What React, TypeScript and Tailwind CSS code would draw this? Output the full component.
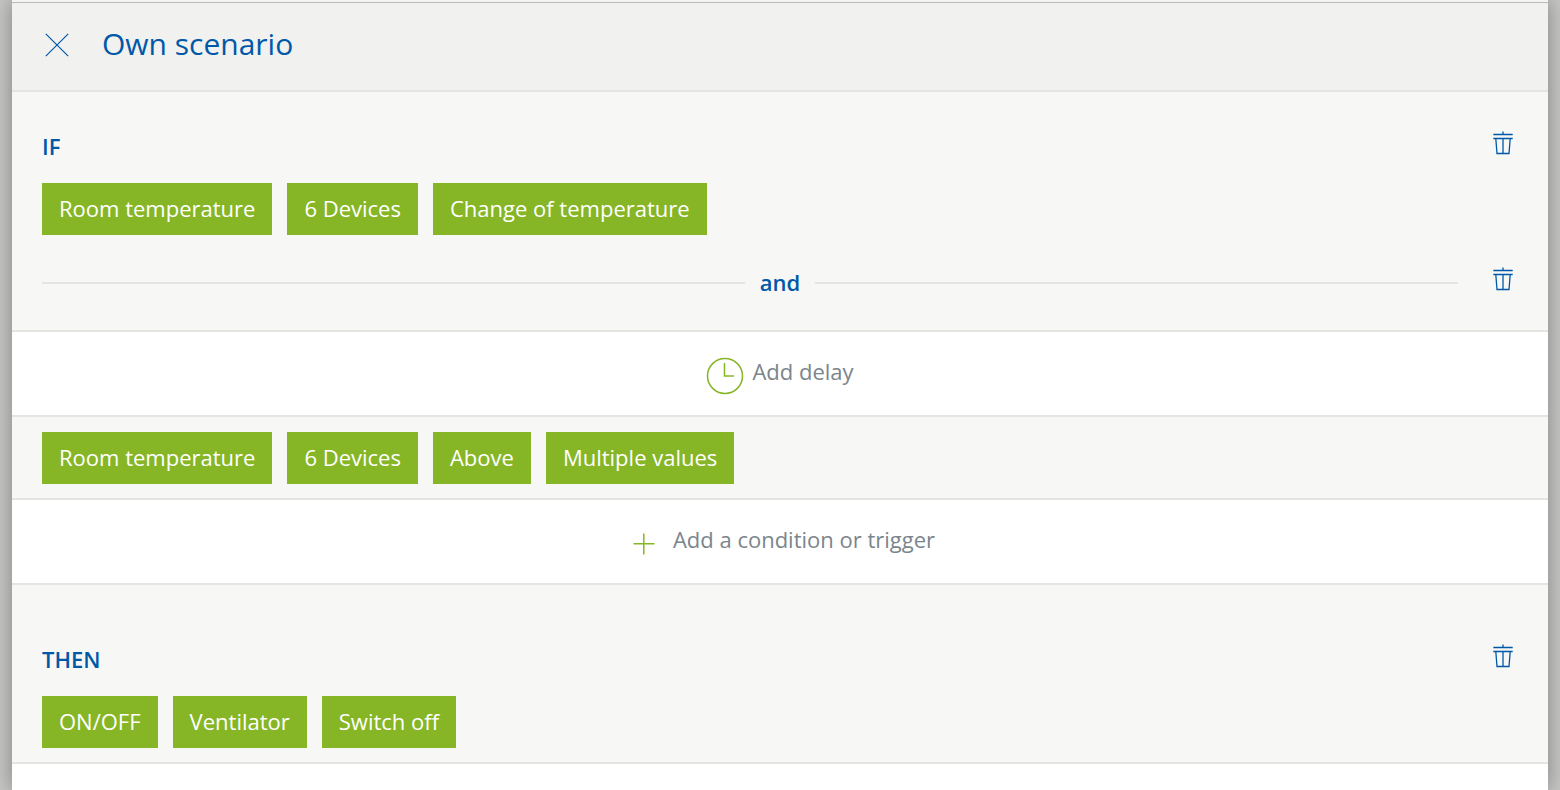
type IconProps = { className?: string };

function CloseIcon({ className }: IconProps) {
  return (
    <svg viewBox="0 0 24 24" className={className} fill="none" stroke="currentColor" strokeWidth="1.2" aria-hidden="true">
      <path d="M.8 .8 23.2 23.2M23.2 .8 .8 23.2" />
    </svg>
  );
}

function TrashIcon({ className }: IconProps) {
  return (
    <svg viewBox="0 0 20 24" className={className} fill="none" stroke="currentColor" strokeWidth="1.3" aria-hidden="true">
      <path d="M.3 3.5h19.4M.3 7.5h19.4M2.8 7.5 4 22.5h12L17.2 7.5" />
      <path d="M10 .5v3M10 7.5v15" />
    </svg>
  );
}

function ClockIcon({ className }: IconProps) {
  return (
    <svg viewBox="0 0 38 38" className={className} fill="none" stroke="currentColor" strokeWidth="1.5" aria-hidden="true">
      <circle cx="19" cy="19" r="17.5" />
      <path d="M18.5 6v13H28" />
    </svg>
  );
}

function PlusIcon({ className }: IconProps) {
  return (
    <svg viewBox="0 0 38 38" className={className} fill="none" stroke="currentColor" strokeWidth="1.5" aria-hidden="true">
      <path d="M18.8 8.5v21M8.5 18.8h21" />
    </svg>
  );
}

function Chips({ items }: { items: string[] }) {
  return (
    <div className="flex flex-wrap gap-[15px]">
      {items.map((item) => (
        <button key={item} type="button" className="h-[52px] bg-[#86b625] px-[17px] pb-0.5 text-white">
          {item}
        </button>
      ))}
    </div>
  );
}

function DeleteButton({ label }: { label: string }) {
  return (
    <button type="button" aria-label={label} className="flex shrink-0 justify-center px-[5px] pb-2 text-[#0058a8]">
      <TrashIcon className="h-6 w-5" />
    </button>
  );
}

export default function App() {
  return (
    <div className="min-h-screen overflow-hidden bg-[#c6c6c4] px-3 font-['Open_Sans','Noto_Sans',sans-serif] text-[22px] leading-8">
      <main className="min-h-screen bg-white shadow-[0_0_20px_rgba(0,0,0,0.35)]">
        {/* Title bar */}
        <div className="h-0.5 bg-[#f4f4f3]" />
        <header className="flex h-[90px] items-center border-t border-b-2 border-t-[#bcbcbb] border-b-[#e4e4e2] bg-[#f1f1ef] px-[33px] pb-1 text-[#0058a8]">
          <button type="button" aria-label="Close">
            <CloseIcon className="size-6" />
          </button>
          <h1 className="ml-[33px] pb-0.5 text-[30px]">Own scenario</h1>
        </header>

        {/* Conditions */}
        <section className="border-b-2 border-[#e4e4e0] bg-[#f7f7f5] px-[30px] pt-[39px] pb-[31px]">
          <div className="mb-5 flex items-center justify-between">
            <h2 className="pb-0.5 leading-[30px] font-semibold text-[#0058a8]">IF</h2>
            <DeleteButton label="Delete trigger" />
          </div>
          <Chips items={["Room temperature", "6 Devices", "Change of temperature"]} />
          <div className="mt-8 grid grid-cols-[1fr_auto_1fr] items-center gap-[15px]">
            <div className="h-0.5 bg-[#e4e4e0]" />
            <span className="pb-0.5 leading-[30px] font-semibold text-[#0058a8]">and</span>
            <div className="flex items-center gap-[30px]">
              <div className="h-0.5 flex-1 bg-[#e4e4e0]" />
              <DeleteButton label="Delete condition" />
            </div>
          </div>
        </section>

        <button type="button" className="flex h-[85px] w-full items-center justify-center gap-2 border-b-2 border-[#e4e4e2] text-[#7b858c]">
          <ClockIcon className="mt-1 size-[38px] text-[#86b625]" />
          <span className="pb-1.5">Add delay</span>
        </button>

        <section className="border-b-2 border-[#e4e4e2] bg-[#f7f7f5] px-[30px] pt-[15px] pb-3.5">
          <Chips items={["Room temperature", "6 Devices", "Above", "Multiple values"]} />
        </section>

        <button type="button" className="flex h-[85px] w-full items-center justify-center gap-2.5 border-b-2 border-[#e4e4e2] text-[#7b858c]">
          <PlusIcon className="mt-1 size-[38px] text-[#86b625]" />
          <span className="pb-1.5">Add a condition or trigger</span>
        </button>

        {/* Actions */}
        <section className="border-b-2 border-[#e4e4e2] bg-[#f7f7f5] px-[30px] pt-[59px] pb-3.5">
          <div className="mb-5 flex items-center justify-between">
            <h2 className="pb-0.5 leading-[30px] font-semibold text-[#0058a8]">THEN</h2>
            <DeleteButton label="Delete action" />
          </div>
          <Chips items={["ON/OFF", "Ventilator", "Switch off"]} />
        </section>
      </main>
    </div>
  );
}
